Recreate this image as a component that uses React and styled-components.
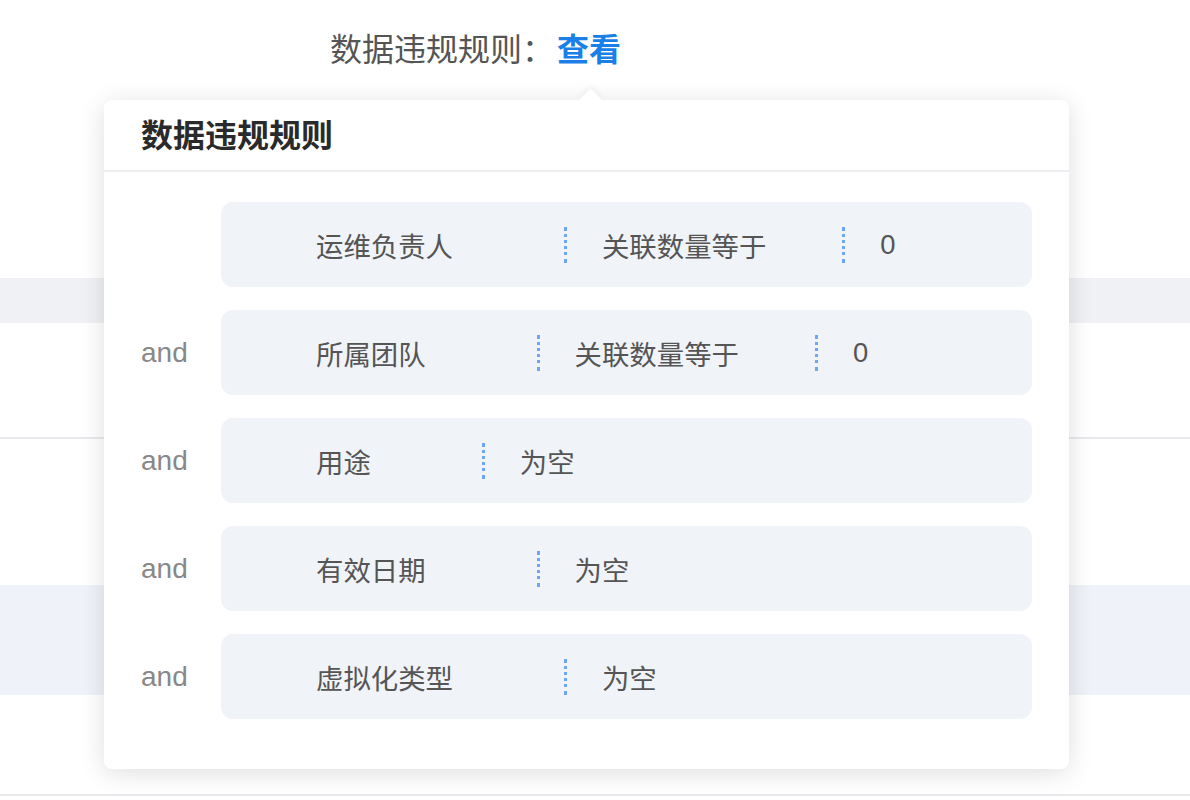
import React from 'react'
import styled, { createGlobalStyle } from 'styled-components'

const rules = [
  { joint: '', parts: ['运维负责人', '关联数量等于', '0'] },
  { joint: 'and', parts: ['所属团队', '关联数量等于', '0'] },
  { joint: 'and', parts: ['用途', '为空'] },
  { joint: 'and', parts: ['有效日期', '为空'] },
  { joint: 'and', parts: ['虚拟化类型', '为空'] }
]

const App = () => {
  return (
    <>
      <GlobalStyle />
      <Page>
        <Label>
          数据违规规则：<ViewLink>查看</ViewLink>
        </Label>
        <Table>
          <TableRow height={45} band='#f0f1f5' />
          <TableRow height={114} line />
          <TableRow height={146} />
          <TableRow height={110} band='#eff3f9' />
          <TableRow height={99} line />
        </Table>

        <Popover>
          <Arrow />
          <PopHeader>数据违规规则</PopHeader>
          <PopBody>
            {rules.map((rule, i) => (
              <RuleLine key={i}>
                <Joint>{rule.joint}</Joint>
                <RuleBox>
                  {rule.parts.map((part, j) => (
                    <React.Fragment key={j}>
                      {j > 0 && <Dots />}
                      <Part first={j === 0}>{part}</Part>
                    </React.Fragment>
                  ))}
                </RuleBox>
              </RuleLine>
            ))}
          </PopBody>
        </Popover>
      </Page>
    </>
  )
}

const GlobalStyle = createGlobalStyle`
  html, body {
    margin: 0;
    padding: 0;
    background: #fff;
  }
  body {
    font-family: "Liberation Sans", "Noto Sans CJK SC", sans-serif;
    color: #555;
  }
`

const Page = styled.div`
  position: relative;
  width: 1190px;
  height: 800px;
  overflow: hidden;
  background: #fff;
`

const Label = styled.div`
  padding: 30px 0 0 330px;
  height: 40px;
  line-height: 40px;
  font-size: 32px;
  color: #555;
`

const ViewLink = styled.span`
  color: #1a7fe6;
  font-weight: 600;
  margin-left: 3px;
`

const Table = styled.div`
  margin-top: 208px;
  display: flex;
  flex-direction: column;
`

const TableRow = styled.div`
  height: ${p => p.height}px;
  background: ${p => p.band || 'transparent'};
  border-bottom: ${p => (p.line ? '2px solid #e8e9ec' : 'none')};
`

const Popover = styled.div`
  position: absolute;
  left: 104px;
  top: 100px;
  width: 965px;
  background: #fff;
  border-radius: 8px;
  box-shadow: 0 4px 26px rgba(0, 0, 0, 0.13);
`

const Arrow = styled.div`
  position: absolute;
  top: -8px;
  left: 478px;
  width: 17px;
  height: 17px;
  background: #fff;
  transform: rotate(45deg);
  box-shadow: -3px -3px 6px rgba(0, 0, 0, 0.04);
`

const PopHeader = styled.div`
  position: relative;
  height: 70px;
  line-height: 72px;
  padding-left: 37px;
  font-size: 32px;
  font-weight: 600;
  color: #2a2a2a;
  border-bottom: 2px solid #eceef2;
`

const PopBody = styled.div`
  display: flex;
  flex-direction: column;
  gap: 23px;
  padding: 30px 37px 50px;
`

const RuleLine = styled.div`
  display: flex;
  align-items: center;
`

const Joint = styled.div`
  width: 80px;
  flex-shrink: 0;
  font-size: 28px;
  color: #888;
`

const RuleBox = styled.div`
  flex: 1;
  height: 85px;
  display: flex;
  align-items: center;
  background: #f0f3f8;
  border-radius: 12px;
`

const Part = styled.div`
  font-size: 27.4px;
  color: #555;
  padding: ${p => (p.first ? '0 111px 0 95px' : '0 76px 0 35px')};
  white-space: nowrap;
`

const Dots = styled.div`
  height: 36px;
  border-left: 3px dotted #6aa8f4;
`

export default App
